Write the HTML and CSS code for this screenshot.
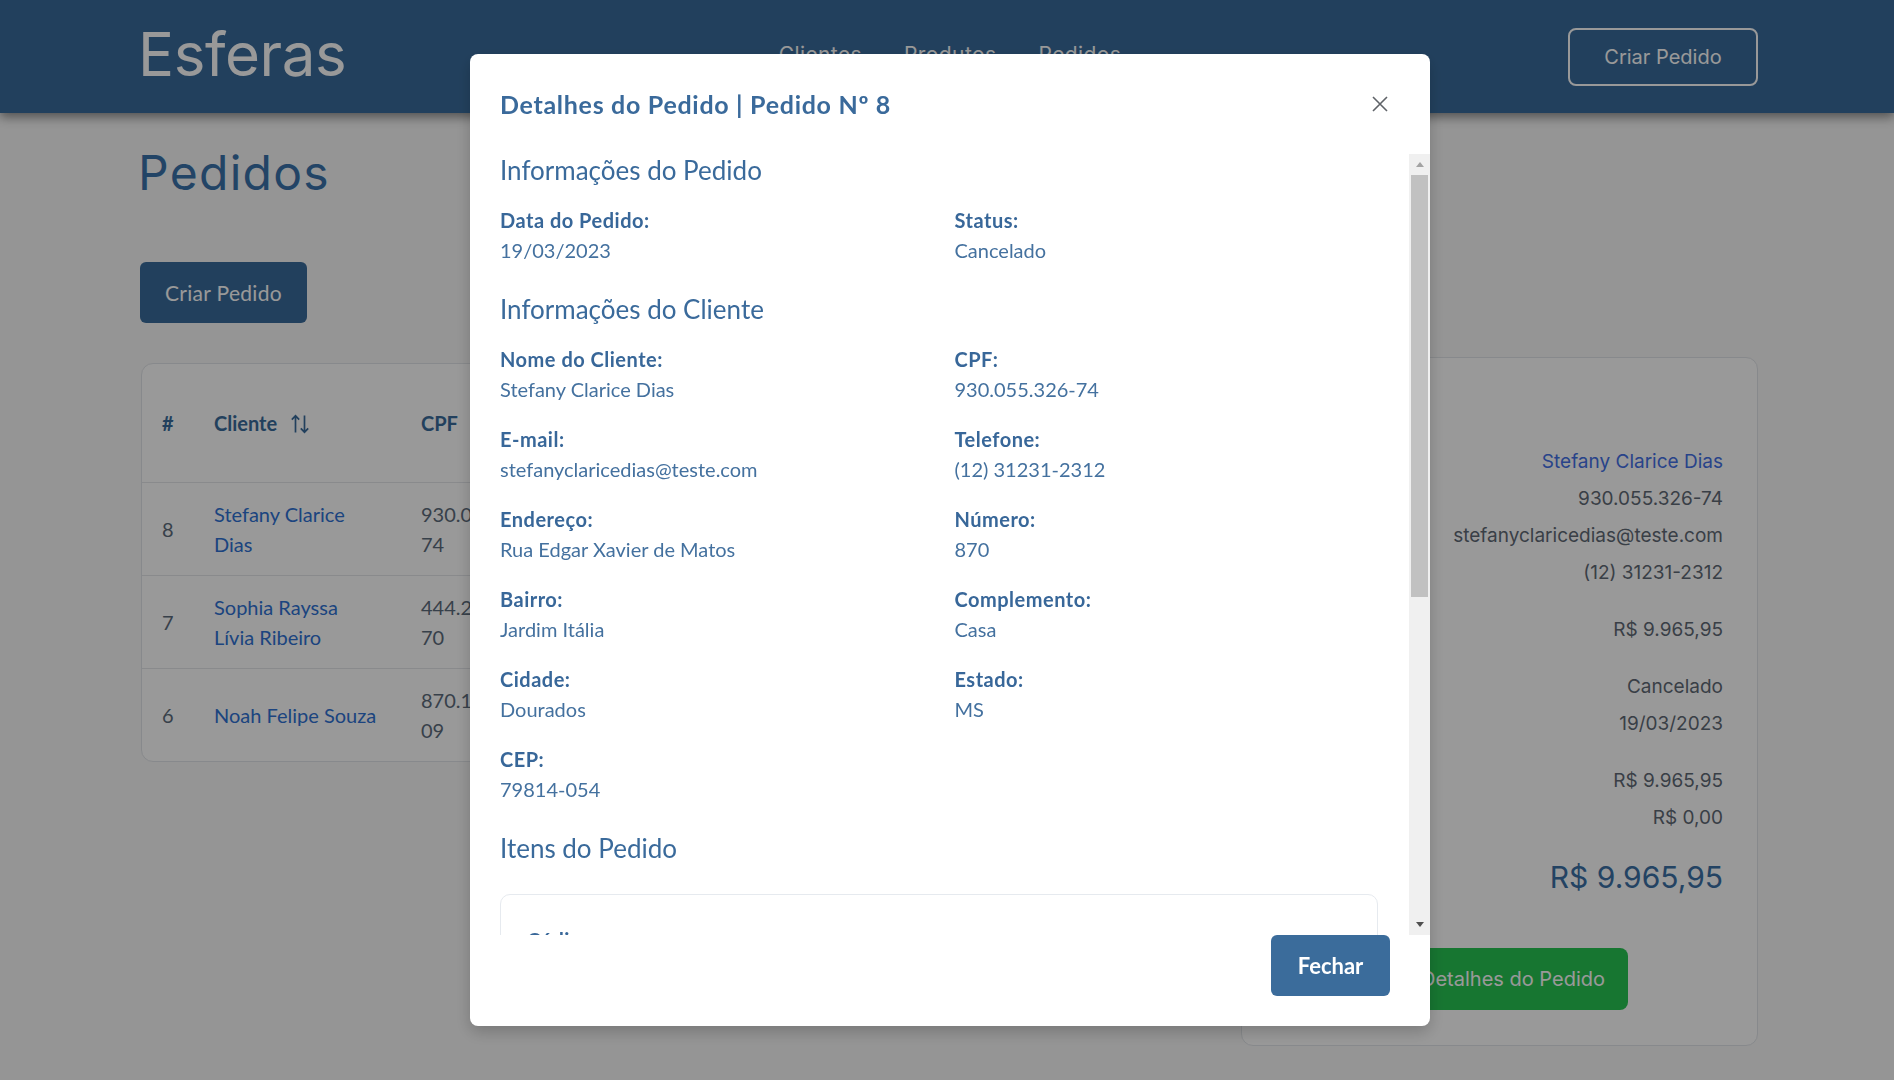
FILE: index.html
```html
<!DOCTYPE html>
<html lang="pt-BR">
<head>
<meta charset="utf-8">
<title>Esferas - Pedidos</title>
<link rel="stylesheet" href="styles.css">
</head>
<body>
<header class="navbar">
  <div class="navbar-inner">
    <a class="brand" href="#">Esferas</a>
    <nav class="nav-links">
      <a class="nav-link" href="#">Clientes</a>
      <a class="nav-link" href="#">Produtos</a>
      <a class="nav-link" href="#">Pedidos</a>
    </nav>
    <div class="nav-actions"><button class="btn-outline" type="button">Criar Pedido</button></div>
  </div>
</header>

<main class="page">
  <h1 class="page-title">Pedidos</h1>
  <button class="btn-primary" type="button">Criar Pedido</button>

  <div class="content-row">
    <section class="table-card">
      <table class="orders">
        <colgroup>
          <col class="col-id"><col class="col-cliente"><col class="col-cpf"><col class="col-email"><col class="col-data"><col>
        </colgroup>
        <thead>
          <tr>
            <th>#</th>
            <th>Cliente <svg class="sort-icon" viewBox="0 0 20 20" width="20" height="20" aria-hidden="true"><path d="M5.5 18.5V1.8M1.8 5.6l3.7-3.8 3.7 3.8M14.5 1.5v16.7M10.8 14.4l3.7 3.8 3.7-3.8" fill="none" stroke="currentColor" stroke-width="1.7"/></svg></th>
            <th>CPF <svg class="sort-icon" viewBox="0 0 20 20" width="20" height="20" aria-hidden="true"><path d="M5.5 18.5V1.8M1.8 5.6l3.7-3.8 3.7 3.8M14.5 1.5v16.7M10.8 14.4l3.7 3.8 3.7-3.8" fill="none" stroke="currentColor" stroke-width="1.7"/></svg></th>
            <th>E-mail</th>
            <th>Data</th>
            <th>Status</th>
          </tr>
        </thead>
        <tbody>
          <tr>
            <td class="muted">8</td>
            <td class="client-name">Stefany Clarice Dias</td>
            <td class="muted">930.055.326-<wbr>74</td>
            <td class="muted">stefanyclaricedias@teste.com</td>
            <td class="muted">19/03/2023</td>
            <td class="muted">Cancelado</td>
          </tr>
          <tr>
            <td class="muted">7</td>
            <td class="client-name">Sophia Rayssa Lívia Ribeiro</td>
            <td class="muted">444.283.158-<wbr>70</td>
            <td class="muted">sophiarayssa@teste.com</td>
            <td class="muted">18/03/2023</td>
            <td class="muted">Entregue</td>
          </tr>
          <tr>
            <td class="muted">6</td>
            <td class="client-name">Noah Felipe Souza</td>
            <td class="muted">870.154.236-<wbr>09</td>
            <td class="muted">noahfelipe@teste.com</td>
            <td class="muted">17/03/2023</td>
            <td class="muted">Enviado</td>
          </tr>
        </tbody>
      </table>
    </section>

    <aside class="summary-card">
      <h2 class="summary-title">Resumo</h2>
      <div class="sum-group">
        <div class="sum-row"><span class="sum-label">Cliente:</span><span class="sum-link">Stefany Clarice Dias</span></div>
        <div class="sum-row"><span class="sum-label">CPF:</span><span>930.055.326-74</span></div>
        <div class="sum-row"><span class="sum-label">E-mail:</span><span>stefanyclaricedias@teste.com</span></div>
        <div class="sum-row"><span class="sum-label">Telefone:</span><span>(12) 31231-2312</span></div>
      </div>
      <div class="sum-group">
        <div class="sum-row"><span class="sum-label">Itens:</span><span>R$ 9.965,95</span></div>
      </div>
      <div class="sum-group">
        <div class="sum-row"><span class="sum-label">Status:</span><span>Cancelado</span></div>
        <div class="sum-row"><span class="sum-label">Data:</span><span>19/03/2023</span></div>
      </div>
      <div class="sum-group">
        <div class="sum-row"><span class="sum-label">Subtotal:</span><span>R$ 9.965,95</span></div>
        <div class="sum-row"><span class="sum-label">Frete:</span><span>R$ 0,00</span></div>
      </div>
      <div class="sum-total"><span class="sum-label">Total:</span><span class="sum-total-value">R$ 9.965,95</span></div>
      <div class="sum-actions">
        <button class="btn-danger" type="button">Excluir</button>
        <button class="btn-success" type="button">Detalhes do Pedido</button>
      </div>
    </aside>
  </div>
</main>

<div class="backdrop"></div>

<div class="modal-layer">
  <div class="modal" role="dialog" aria-labelledby="modal-title">
    <div class="modal-header">
      <h2 class="modal-title" id="modal-title">Detalhes do Pedido | Pedido Nº 8</h2>
      <button class="btn-close" type="button" aria-label="Fechar">
        <svg viewBox="0 0 16 16" width="16" height="16" aria-hidden="true"><path d="M1 1l14 14M15 1L1 15" stroke="#5f6368" stroke-width="1.6" fill="none"/></svg>
      </button>
    </div>

    <div class="modal-body">
      <div class="modal-scroll">
        <h3 class="section-title">Informações do Pedido</h3>
        <div class="fields">
          <div class="field"><div class="label">Data do Pedido:</div><div class="value">19/03/2023</div></div>
          <div class="field"><div class="label">Status:</div><div class="value">Cancelado</div></div>
        </div>

        <h3 class="section-title">Informações do Cliente</h3>
        <div class="fields">
          <div class="field"><div class="label">Nome do Cliente:</div><div class="value">Stefany Clarice Dias</div></div>
          <div class="field"><div class="label">CPF:</div><div class="value">930.055.326-74</div></div>
          <div class="field"><div class="label">E-mail:</div><div class="value">stefanyclaricedias@teste.com</div></div>
          <div class="field"><div class="label">Telefone:</div><div class="value">(12) 31231-2312</div></div>
          <div class="field"><div class="label">Endereço:</div><div class="value">Rua Edgar Xavier de Matos</div></div>
          <div class="field"><div class="label">Número:</div><div class="value">870</div></div>
          <div class="field"><div class="label">Bairro:</div><div class="value">Jardim Itália</div></div>
          <div class="field"><div class="label">Complemento:</div><div class="value">Casa</div></div>
          <div class="field"><div class="label">Cidade:</div><div class="value">Dourados</div></div>
          <div class="field"><div class="label">Estado:</div><div class="value">MS</div></div>
          <div class="field"><div class="label">CEP:</div><div class="value">79814-054</div></div>
        </div>

        <h3 class="section-title">Itens do Pedido</h3>
        <div class="items-card">
          <div class="item-field"><div class="label">Código:</div><div class="value">12</div></div>
          <div class="item-field"><div class="label">Produto:</div><div class="value">Notebook</div></div>
          <div class="item-field"><div class="label">Quantidade:</div><div class="value">1</div></div>
          <div class="item-field"><div class="label">Preço Unitário:</div><div class="value">R$ 9.965,95</div></div>
        </div>
      </div>
      <div class="scrollbar" aria-hidden="true">
        <div class="sb-btn"><span class="sb-arrow-up"></span></div>
        <div class="sb-track"><div class="sb-thumb"></div></div>
        <div class="sb-btn"><span class="sb-arrow-down"></span></div>
      </div>
    </div>

    <div class="modal-footer">
      <button class="btn-fechar" type="button">Fechar</button>
    </div>
  </div>
</div>
</body>
</html>
```

FILE: styles.css
```css
* { box-sizing: border-box; }

html, body { margin: 0; padding: 0; }

body {
  width: 1894px;
  height: 1080px;
  overflow: hidden;
  background: #f8f8f8;
  font-family: "Lato", "Liberation Sans", sans-serif;
  color: #333;
}

button { font: inherit; cursor: pointer; }

/* ---------- Navbar ---------- */
.navbar {
  position: relative;
  height: 113px;
  background: #3a6c9c;
  box-shadow: 0 4px 10px rgba(0, 0, 0, 0.45);
}

.navbar-inner {
  height: 100%;
  display: grid;
  grid-template-columns: 1fr auto 1fr;
  align-items: center;
  padding: 0 136px 0 138px;
}

.brand {
  justify-self: start;
  margin-bottom: 5px;
  font-family: "Inter", sans-serif;
  font-size: 60px;
  line-height: 72px;
  letter-spacing: -0.4px;
  color: #fff;
  text-decoration: none;
}

.nav-links {
  display: flex;
  gap: 42px;
  margin-bottom: 4px;
  margin-left: 4px;
}

.nav-link {
  font-family: "Inter", sans-serif;
  font-size: 21px;
  line-height: 28px;
  letter-spacing: 0.4px;
  color: #fff;
  text-decoration: none;
}

.nav-actions { justify-self: end; }

.btn-outline {
  width: 190px;
  height: 58px;
  border: 2px solid #fff;
  border-radius: 8px;
  background: transparent;
  color: #fff;
  font-family: "Inter", sans-serif;
  font-size: 20px;
}

/* ---------- Page ---------- */
.page { padding: 30px 136px 0 141px; }

.page-title {
  margin: 0 0 0 -3px;
  font-family: "Inter", sans-serif;
  font-weight: 400;
  font-size: 48px;
  line-height: 60px;
  letter-spacing: 1.3px;
  color: #3a72aa;
}

.btn-primary {
  display: block;
  margin-top: 59px;
  margin-left: -1px;
  width: 167px;
  height: 61px;
  border: 0;
  border-radius: 6px;
  background: #3a6c9c;
  color: #fff;
  font-size: 21px;
  letter-spacing: 0.3px;
}

.content-row {
  display: flex;
  align-items: flex-start;
  gap: 30px;
  margin-top: 34px;
}

.table-card {
  flex: 1;
  margin-top: 6px;
  background: #fff;
  border: 1px solid #e2e5e9;
  border-radius: 12px;
  overflow: hidden;
}

.orders {
  width: 100%;
  border-collapse: collapse;
  table-layout: fixed;
  font-size: 20px;
  line-height: 30px;
}

.orders th,
.orders td {
  padding: 16px 19px 16px 20px;
  text-align: left;
  vertical-align: middle;
}

.orders th {
  padding-top: 44px;
  padding-bottom: 44px;
  font-weight: 700;
  color: #3a6c9c;
  white-space: nowrap;
}

.orders tbody tr { border-top: 1px solid #e4e6ea; }

.col-id { width: 52px; }
.col-cliente { width: 207px; }
.col-cpf { width: 160px; }
.col-email { width: 320px; }
.col-data { width: 150px; }

.sort-icon {
  vertical-align: -3px;
  margin-left: 8px;
  color: #3a6c9c;
}

.client-name { color: #2f72d4; }
.muted { color: #5d6c7c; }

/* ---------- Summary card ---------- */
.summary-card {
  width: 517px;
  background: #fff;
  border: 1px solid #e2e5e9;
  border-radius: 12px;
  padding: 26px 34px 35px 30px;
  font-family: "Inter", sans-serif;
  font-size: 19px;
  color: #5f6a76;
}

.summary-title {
  margin: 0 0 18.5px;
  font-size: 22px;
  line-height: 40px;
  font-weight: 600;
  color: #3a6c9c;
}

.sum-group + .sum-group { margin-top: 20px; }

.sum-row {
  display: flex;
  justify-content: space-between;
  line-height: 37px;
}

.sum-label { color: #3a6c9c; font-weight: 500; }
.sum-link { color: #4470e6; }

.sum-total {
  margin-top: 21px;
  display: flex;
  justify-content: space-between;
  align-items: center;
  line-height: 40px;
}

.sum-total-value { font-size: 30px; color: #3b70a6; }

.sum-actions {
  display: flex;
  gap: 16px;
  margin-top: 51px;
}

.btn-danger,
.btn-success {
  height: 62px;
  border: 0;
  border-radius: 8px;
  color: #fff;
  font-family: "Inter", sans-serif;
  font-size: 20px;
}

.btn-danger { width: 110px; background: #e0525c; }
.btn-success { padding: 0 23px; background: #27c553; }

/* ---------- Modal ---------- */
.backdrop {
  position: fixed;
  inset: 0;
  background: rgba(0, 0, 0, 0.4);
}

.modal-layer {
  position: fixed;
  inset: 0;
  display: flex;
  justify-content: center;
  align-items: center;
  padding-left: 6px;
}

.modal {
  width: 960px;
  display: flex;
  flex-direction: column;
  background: #fff;
  border-radius: 8px;
  box-shadow: 0 6px 16px rgba(0, 0, 0, 0.2);
  overflow: hidden;
  color: #3a6a9b;
}

.modal-header {
  display: flex;
  align-items: center;
  justify-content: space-between;
  padding: 30px 42px 30px 30px;
}

.modal-title {
  margin: 0;
  font-size: 25px;
  line-height: 40px;
  font-weight: 700;
  letter-spacing: 0.7px;
  color: #3a6a9b;
}

.btn-close {
  display: flex;
  width: 16px;
  height: 16px;
  padding: 0;
  border: 0;
  background: none;
}

.modal-body {
  display: flex;
  height: 781px;
}

.modal-scroll {
  flex: 1;
  overflow: hidden;
  padding-left: 30px;
}

.section-title {
  margin: 0 0 19px;
  font-size: 26px;
  line-height: 32px;
  font-weight: 400;
  color: #3a6a9b;
}

.fields {
  display: grid;
  grid-template-columns: 1fr 1fr;
  row-gap: 20px;
  margin-bottom: 28px;
}

.label {
  font-size: 20px;
  line-height: 30px;
  font-weight: 700;
  letter-spacing: 0.5px;
  color: #386799;
}

.value {
  font-size: 20px;
  line-height: 30px;
  color: #44719f;
}

.items-card {
  margin: 30px 31px 0 0;
  border: 1px solid #e6eaef;
  border-radius: 10px;
  padding: 30px 26px 40px;
  display: flex;
  flex-direction: column;
  gap: 20px;
}

/* decorative classic scrollbar */
.scrollbar {
  width: 21px;
  display: flex;
  flex-direction: column;
  background: #f0f0f0;
}

.sb-btn {
  height: 21px;
  display: flex;
  align-items: center;
  justify-content: center;
}

.sb-arrow-up {
  width: 0;
  height: 0;
  border-left: 4.5px solid transparent;
  border-right: 4.5px solid transparent;
  border-bottom: 5px solid #a3a3a3;
}

.sb-arrow-down {
  width: 0;
  height: 0;
  border-left: 4.5px solid transparent;
  border-right: 4.5px solid transparent;
  border-top: 5px solid #505050;
}

.sb-track {
  flex: 1;
  padding: 0 2px;
}

.sb-thumb {
  height: 422px;
  background: #c1c1c1;
}

.modal-footer {
  display: flex;
  justify-content: flex-end;
  padding: 0 40px 30px;
}

.btn-fechar {
  width: 119px;
  height: 61px;
  border: 0;
  border-radius: 6px;
  background: #3b6c9b;
  color: #fff;
  font-size: 22px;
  font-weight: 700;
}
```
